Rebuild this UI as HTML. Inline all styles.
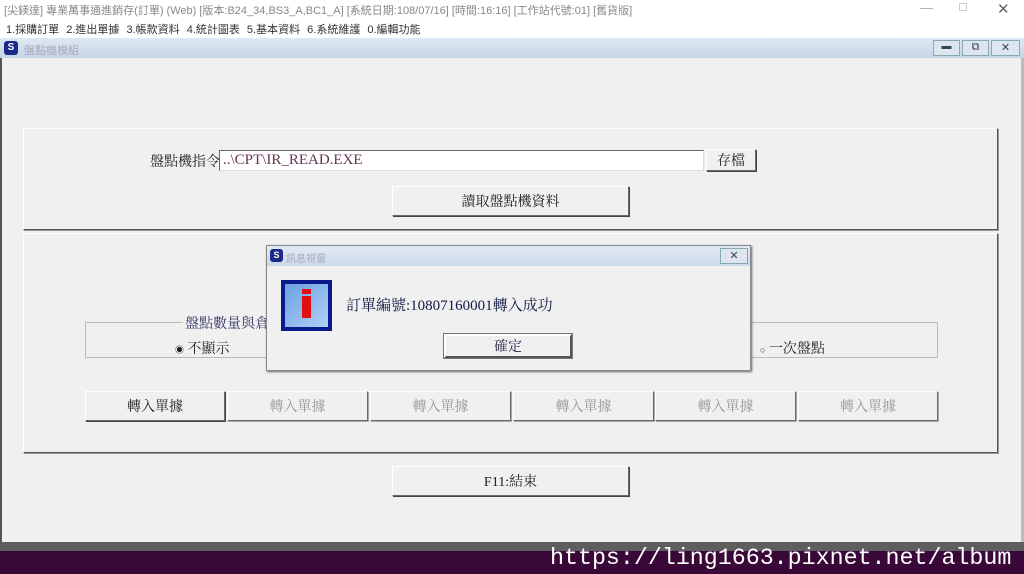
<!DOCTYPE html>
<html><head><meta charset="utf-8"><style>
*{margin:0;padding:0;box-sizing:border-box}
body{width:1024px;height:574px;overflow:hidden;background:#f0f0f0;font-family:"Liberation Sans","Noto Sans CJK TC",sans-serif;position:relative}
.a{position:absolute}
.btn{position:absolute;background:#f0f0f0;border:1px solid;border-color:#fff #6a6a6a #6a6a6a #fff;box-shadow:1px 1px 0 #444;font-size:14px;color:#222;display:flex;align-items:center;justify-content:center;font-family:"Liberation Serif","Noto Serif CJK SC",serif}
.dis{color:#999;box-shadow:1px 1px 0 #aaa}
.panel{position:absolute;border:1px solid;border-color:#fff #555 #555 #fff;box-shadow:1px 1px 0 #999}
</style></head><body>
<div class="a" style="left:0;top:0;width:1024px;height:38px;background:#fff"></div>
<div class="a" style="left:4px;top:2px;font-size:11px;color:#888;white-space:nowrap">[尖鎂達] 專業萬事通進銷存(訂單) (Web) [版本:B24_34,BS3_A,BC1_A] [系統日期:108/07/16] [時間:16:16] [工作站代號:01] [舊貨版]</div>
<div class="a" style="left:6px;top:21px;font-size:11px;color:#333;white-space:nowrap;word-spacing:4px">1.採購訂單 2.進出單據 3.帳款資料 4.統計圖表 5.基本資料 6.系統維護 0.編輯功能</div>
<div class="a" style="left:920px;top:0;font-size:13px;color:#aaa">—</div>
<div class="a" style="left:959px;top:3px;width:8px;height:8px;border:1px solid #ccc"></div>
<div class="a" style="left:997px;top:0;font-size:15px;color:#666">✕</div>
<div class="a" style="left:0;top:38px;width:1024px;height:20px;background:linear-gradient(#dfe8f3,#c5d5e8)"></div>
<div class="a" style="left:4px;top:41px;width:14px;height:14px;background:#1a2a8a;border-radius:3px;color:#fff;font-size:10px;font-weight:bold;text-align:center;line-height:14px">S</div>
<div class="a" style="left:24px;top:42px;font-size:11px;color:#aab">盤點機模組</div>
<div class="a" style="left:933px;top:40px;width:27px;height:16px;border:1px solid #8aa;background:#dde6f0;text-align:center;font-size:10px;color:#345">▬</div>
<div class="a" style="left:962px;top:40px;width:27px;height:16px;border:1px solid #8aa;background:#dde6f0;text-align:center;font-size:11px;color:#345">⧉</div>
<div class="a" style="left:991px;top:40px;width:29px;height:16px;border:1px solid #8aa;background:#dde6f0;text-align:center;font-size:11px;color:#345">✕</div>
<div class="a" style="left:0;top:58px;width:2px;height:484px;background:#555"></div>
<div class="a" style="left:1021px;top:58px;width:3px;height:484px;background:#bbb"></div>

<div class="panel" style="left:23px;top:128px;width:975px;height:102px"></div>
<div class="a" style="left:150px;top:151px;font-size:14px;color:#222;font-family:'Liberation Serif','Noto Serif CJK SC',serif">盤點機指令</div>
<div class="a" style="left:219px;top:150px;width:485px;height:21px;background:#fff;border:1px solid;border-color:#666 #ddd #ddd #666;font-family:'Liberation Serif',serif;font-size:15px;color:#635;padding-left:3px;line-height:18px">..\CPT\IR_READ.EXE</div>
<div class="btn" style="left:706px;top:149px;width:50px;height:22px">存檔</div>
<div class="btn" style="left:392px;top:186px;width:237px;height:30px">讀取盤點機資料</div>

<div class="panel" style="left:23px;top:233px;width:975px;height:220px"></div>
<div class="a" style="left:85px;top:322px;width:853px;height:36px;border:1px solid #bbb"></div>
<div class="a" style="left:183px;top:313px;font-size:14px;color:#336;background:#f0f0f0;padding:0 2px;font-family:'Liberation Serif','Noto Serif CJK SC',serif">盤點數量與倉</div>
<div class="a" style="left:175px;top:338px;font-size:14px;color:#222;font-family:'Liberation Serif','Noto Serif CJK SC',serif"><span style="font-size:9px">◉</span> 不顯示</div>
<div class="a" style="left:760px;top:338px;font-size:14px;color:#222;font-family:'Liberation Serif','Noto Serif CJK SC',serif"><span style="font-size:9px">○</span> 一次盤點</div>
<div class="btn" style="left:85px;top:391px;width:140px;height:30px">轉入單據</div>
<div class="btn dis" style="left:227px;top:391px;width:141px;height:30px">轉入單據</div>
<div class="btn dis" style="left:370px;top:391px;width:141px;height:30px">轉入單據</div>
<div class="btn dis" style="left:513px;top:391px;width:141px;height:30px">轉入單據</div>
<div class="btn dis" style="left:655px;top:391px;width:141px;height:30px">轉入單據</div>
<div class="btn dis" style="left:798px;top:391px;width:140px;height:30px">轉入單據</div>
<div class="btn" style="left:392px;top:466px;width:237px;height:30px">F11:結束</div>

<div class="a" style="left:266px;top:245px;width:485px;height:126px;background:#f0f0f0;border:1px solid #888;box-shadow:1px 1px 2px #666"></div>
<div class="a" style="left:267px;top:246px;width:483px;height:20px;background:linear-gradient(#e2eaf4,#cbd9ea)"></div>
<div class="a" style="left:270px;top:249px;width:13px;height:13px;background:#1a2a8a;border-radius:3px;color:#fff;font-size:9px;font-weight:bold;text-align:center;line-height:13px">S</div>
<div class="a" style="left:286px;top:250px;font-size:10px;color:#aab">訊息視窗</div>
<div class="a" style="left:720px;top:248px;width:28px;height:16px;border:1px solid #8aa;background:#dde6f0;text-align:center;font-size:11px;color:#345;line-height:14px">✕</div>
<div class="a" style="left:281px;top:280px;width:51px;height:51px;background:#0a1a8a;padding:4px"><div style="width:100%;height:100%;background:linear-gradient(135deg,#6aa0e0,#b0d0f8);position:relative"><div style="position:absolute;left:17px;top:5px;width:9px;height:5px;background:#e01010"></div><div style="position:absolute;left:17px;top:12px;width:9px;height:22px;background:#e01010"></div></div></div>
<div class="a" style="left:346px;top:294px;font-size:15px;color:#111a44;font-family:'Liberation Serif','Noto Serif CJK SC',serif">訂單編號:10807160001轉入成功</div>
<div class="btn" style="left:444px;top:334px;width:128px;height:24px;border:2px solid;border-color:#fff #555 #555 #fff;color:#224;box-shadow:0 0 0 1px #777">確定</div>

<div class="a" style="left:0;top:542px;width:1024px;height:9px;background:#5e5e5e"></div>
<div class="a" style="left:0;top:551px;width:1024px;height:23px;background:#3a0838"></div>
<div class="a" style="left:550px;top:545px;font-family:'Liberation Mono',monospace;font-size:23.3px;color:#fff;white-space:nowrap">https://ling1663.pixnet.net/album</div>
</body></html>
